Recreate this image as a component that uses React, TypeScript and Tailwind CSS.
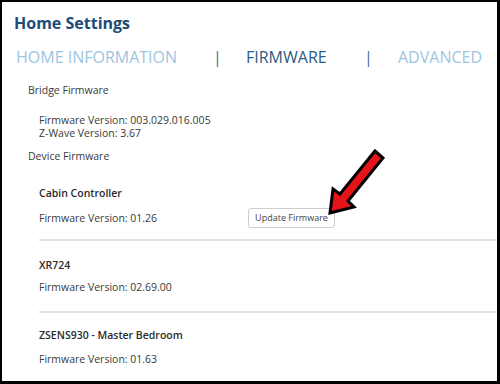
export default function App() {
  const font = { fontFamily: '"Open Sans", "Noto Sans", sans-serif' };
  return (
    <div
      className="relative w-[500px] h-[384px] overflow-hidden bg-white border-2 border-black border-r-[3px] border-b-[3px] text-[#3a3a3a]"
      style={font}
    >
      <h1 className="pl-[12px] pt-[11px] text-[16px] leading-[20px] font-bold text-[#1d4b77]">
        Home Settings
      </h1>

      <nav className="mt-[14px] flex items-center pl-[14px] text-[16px] leading-[20px]">
        <span className="w-[197px] text-[#9dc5df]">HOME INFORMATION</span>
        <span className="w-[33px] text-[#3f6b92]">|</span>
        <span className="w-[118px] text-[#2b5a85]">FIRMWARE</span>
        <span className="w-[34px] text-[#3f6b92]">|</span>
        <span className="text-[#9dc5df]">ADVANCED</span>
      </nav>

      <div className="pl-[26px] mt-[16px] text-[10.5px] leading-[14px]">Bridge Firmware</div>
      <div className="pl-[37px] mt-[17px] text-[10.5px] leading-[13px]">
        <div>Firmware Version: 003.029.016.005</div>
        <div>Z-Wave Version: 3.67</div>
      </div>

      <div className="pl-[26px] mt-[9px] text-[10.5px] leading-[14px]">Device Firmware</div>

      <div className="pl-[37px] text-[10.5px] leading-[14px]">
        <div className="mt-[23px] font-semibold text-[#2a2a2a]">Cabin Controller</div>
        <div className="mt-[8px] flex items-center h-[20px]">
          <span className="w-[209px]">Firmware Version: 01.26</span>
          <button className="h-[20px] w-[87px] rounded-[3px] border border-[#cfcfcf] bg-white text-[9px] text-[#444]">
            Update Firmware
          </button>
        </div>
        <div className="mt-[11px] h-[2px] bg-[#e2e2e2]" />

        <div className="mt-[17px] font-semibold text-[#2a2a2a]">XR724</div>
        <div className="mt-[8px]">Firmware Version: 02.69.00</div>
        <div className="mt-[17px] h-[2px] bg-[#e2e2e2]" />

        <div className="mt-[15px] font-semibold text-[#2a2a2a]">ZSENS930 - Master Bedroom</div>
        <div className="mt-[10px]">Firmware Version: 01.63</div>
      </div>

      <svg className="absolute left-[-2px] top-[-2px]" width="500" height="384" viewBox="0 0 500 384">
        <polygon
          points="375,151 383,158 348,201 354,207 330,213 333,189 340,194"
          fill="#e5141b"
          stroke="#000"
          strokeWidth="3"
          strokeLinejoin="miter"
        />
      </svg>
    </div>
  );
}
